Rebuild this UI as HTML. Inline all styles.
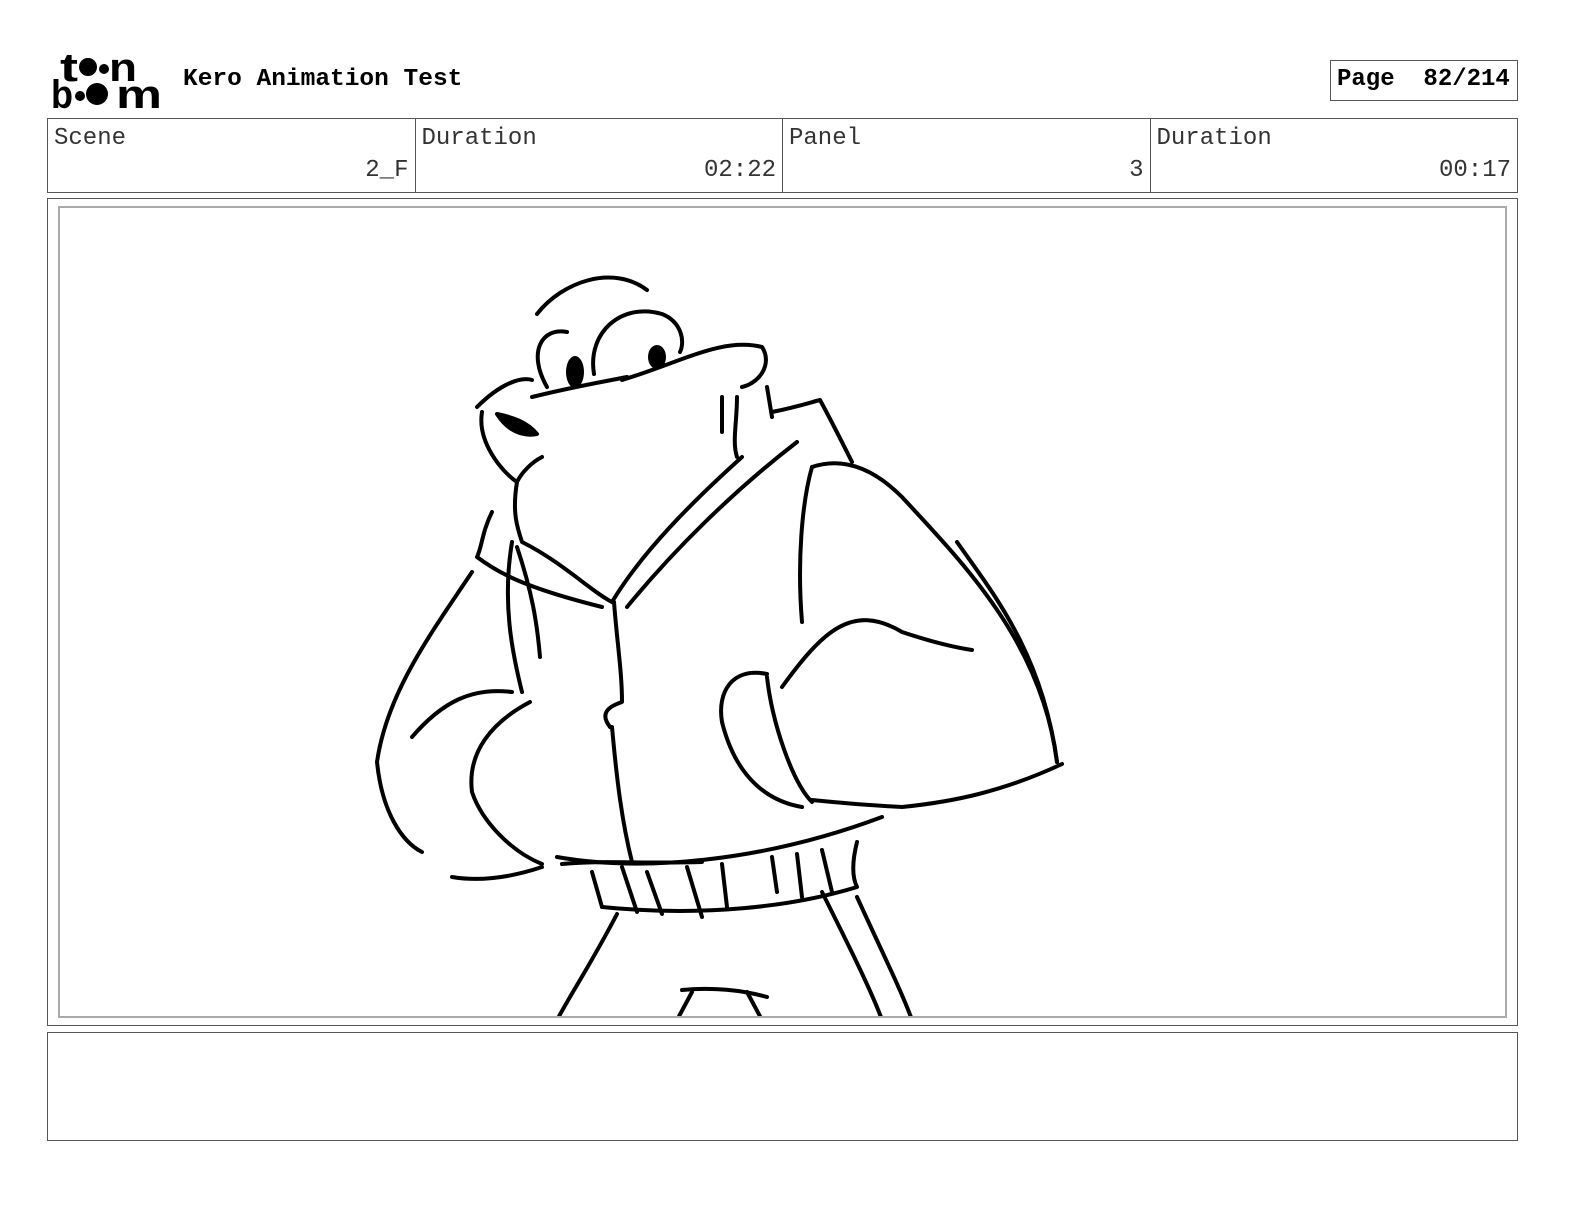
<!DOCTYPE html>
<html><head><meta charset="utf-8"><style>
*{margin:0;padding:0;box-sizing:border-box}
body{width:1584px;height:1224px;background:#fff;position:relative;font-family:"Liberation Mono",monospace;overflow:hidden}
.abs{position:absolute}
.title{left:183px;top:66px;font-size:24.5px;font-weight:bold;line-height:28px}
.page{left:1330px;top:60px;width:188px;height:41px;border:1px solid #555;font-size:24px;font-weight:bold;padding:5px 0 0 6px;white-space:pre;line-height:28px}
.hdr{left:47px;top:118px;width:1471px;height:75px;border:1px solid #555;display:flex}
.cell{flex:1;border-left:1px solid #555;position:relative;font-size:24px;color:#333;line-height:28px}
.cell:first-child{border-left:none}
.cell .l{position:absolute;left:6px;top:6px}
.cell .v{position:absolute;right:6px;top:38px}
.panel{left:47px;top:198px;width:1471px;height:828px;border:1px solid #555}
.inner{left:58px;top:206px;width:1449px;height:812px;border:2px solid #aaa;overflow:hidden}
.notes{left:47px;top:1032px;width:1471px;height:109px;border:1px solid #555}
</style></head><body>
<svg class="abs" style="left:0;top:0" width="180" height="120">
<g font-family="Liberation Sans,sans-serif" font-weight="bold" fill="#000">
<text x="60" y="81" font-size="40" textLength="18" lengthAdjust="spacingAndGlyphs">t</text>
<circle cx="88" cy="67" r="9"/>
<circle cx="104" cy="69" r="5"/>
<text x="109" y="81" font-size="40" textLength="28" lengthAdjust="spacingAndGlyphs">n</text>
<text x="51" y="108" font-size="40" textLength="22" lengthAdjust="spacingAndGlyphs">b</text>
<circle cx="80" cy="96" r="5"/>
<circle cx="97" cy="94" r="11"/>
<text x="116" y="108" font-size="40" textLength="46" lengthAdjust="spacingAndGlyphs">m</text>
</g></svg>
<div class="abs title">Kero Animation Test</div>
<div class="abs page">Page  82/214</div>
<div class="abs hdr">
<div class="cell"><span class="l">Scene</span><span class="v">2_F</span></div>
<div class="cell"><span class="l">Duration</span><span class="v">02:22</span></div>
<div class="cell"><span class="l">Panel</span><span class="v">3</span></div>
<div class="cell"><span class="l">Duration</span><span class="v">00:17</span></div>
</div>
<div class="abs panel"></div>
<div class="abs inner">
<svg width="1449" height="812" viewBox="58 206 1449 812" fill="none" stroke="#000" stroke-width="4" stroke-linecap="round" stroke-linejoin="round">
<path d="M535 312 C560 280 610 262 645 288"/>
<path d="M545 385 C525 350 540 325 565 330"/>
<path d="M592 372 C585 330 620 300 660 312 C680 320 683 340 678 350"/>
<path d="M620 378 C680 360 720 335 760 345 C770 360 760 380 740 385"/>
<path d="M475 405 C500 380 520 375 530 378"/>
<path d="M480 410 C475 440 500 470 515 480 C520 470 530 460 540 455"/>
<path d="M530 395 C570 385 600 380 625 375"/>
<path d="M515 480 C510 510 515 525 520 540 C560 560 590 590 610 600"/>
<path d="M735 395 C735 420 730 440 735 455"/>
<path d="M720 395 L720 430 M765 385 L770 415"/>
<path d="M770 410 C795 405 810 400 818 398 C830 420 840 440 850 460"/>
<path d="M740 455 C690 500 640 550 610 600"/>
<path d="M795 440 C730 490 670 550 625 605"/>
<path d="M810 465 C840 455 870 465 900 495 C960 560 1040 640 1055 760"/>
<path d="M955 540 C990 590 1040 650 1055 760"/>
<path d="M810 465 C800 500 795 560 800 620"/>
<path d="M780 685 C820 630 850 600 900 630 C930 640 950 645 970 648"/>
<path d="M1060 762 C1000 790 950 800 900 805 C860 803 830 800 810 798"/>
<path d="M765 672 C730 665 715 690 720 720 C735 780 770 800 800 805"/>
<path d="M765 675 C770 720 790 780 810 800"/>
<path d="M490 510 C480 530 480 545 475 555 C495 570 520 585 600 605"/>
<path d="M470 570 C430 630 385 690 375 760 C380 810 400 840 420 850"/>
<path d="M410 735 C440 700 470 685 510 690"/>
<path d="M528 700 C490 720 465 750 470 790 C480 820 510 850 540 862"/>
<path d="M450 875 C480 880 510 875 540 865"/>
<path d="M510 540 C500 600 510 650 520 690"/>
<path d="M515 545 C530 590 535 620 538 655"/>
<path d="M612 600 C615 640 620 670 620 700 C605 705 598 712 608 725"/>
<path d="M610 725 C615 780 620 820 630 860"/>
<path d="M555 855 C640 870 760 860 880 815"/>
<path d="M560 862 C600 858 640 862 700 860"/>
<path d="M855 840 C850 860 850 875 855 885 C790 905 700 915 600 905"/>
<path d="M590 870 L600 905 M620 865 L635 910 M645 870 L660 912 M685 865 L700 915 M720 862 L725 905 M770 855 L775 890 M795 852 L800 895 M820 848 L830 890"/>
<path d="M615 912 C590 960 570 990 555 1018"/>
<path d="M820 890 C845 940 870 990 880 1018"/>
<path d="M855 895 C880 950 900 990 910 1018"/>
<path d="M680 988 C710 985 740 988 765 995"/>
<path d="M690 990 L675 1018 M745 990 L760 1018"/>
<path d="M495 412 C510 415 525 420 535 432 C520 435 505 428 495 412Z" fill="#000"/>
<ellipse cx="573" cy="370" rx="9" ry="16" fill="#000" stroke="none"/>
<ellipse cx="655" cy="355" rx="9" ry="12" fill="#000" stroke="none"/>
</svg>
</div>
<div class="abs notes"></div>
</body></html>
